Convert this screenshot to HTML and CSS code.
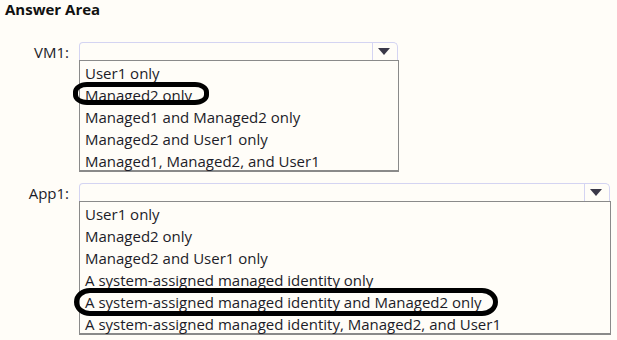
FILE: index.html
```html
<!DOCTYPE html>
<html>
<head>
<meta charset="utf-8">
<link rel="stylesheet" href="styles.css">
</head>
<body>
<div class="page">
  <h1 class="title">Answer Area</h1>
  <div class="row vm">
    <div class="label">VM1:</div>
    <div class="control">
      <div class="select"><span class="arrow"></span></div>
      <ul class="list">
        <li>User1 only</li>
        <li class="marked">Managed2 only</li>
        <li>Managed1 and Managed2 only</li>
        <li>Managed2 and User1 only</li>
        <li>Managed1, Managed2, and User1</li>
      </ul>
    </div>
  </div>
  <div class="row app">
    <div class="label">App1:</div>
    <div class="control">
      <div class="select"><span class="arrow"></span></div>
      <ul class="list">
        <li>User1 only</li>
        <li>Managed2 only</li>
        <li>Managed2 and User1 only</li>
        <li>A system-assigned managed identity only</li>
        <li class="marked">A system-assigned managed identity and Managed2 only</li>
        <li>A system-assigned managed identity, Managed2, and User1</li>
      </ul>
    </div>
  </div>
</div>
</body>
</html>
```
FILE: styles.css
```css
html, body {
  margin: 0;
  padding: 0;
  background: #fffdf8;
}
body {
  font-family: "Open Sans", "Noto Sans", sans-serif;
  color: #1c1c28;
  width: 617px;
  height: 340px;
  overflow: hidden;
}
.page {
  padding: 0 0 0 5px;
}
.title {
  margin: 0;
  font-size: 15px;
  font-weight: 700;
  line-height: 19px;
  color: #111;
}
.row {
  display: flex;
  align-items: flex-start;
}
.vm { margin-top: 23px; }
.app { margin-top: 11px; }
.label {
  width: 64px;
  text-align: right;
  font-size: 15px;
  line-height: 18px;
  padding-top: 1px;
  padding-right: 10px;
}
.vm .control { width: 320px; }
.app .control { width: 532px; }
.select {
  height: 17px;
  border: 1px solid #d4d4f2;
  border-bottom: none;
  border-radius: 4px 5px 0 0;
  display: flex;
  justify-content: flex-end;
  margin-right: 1px;
}
.arrow {
  width: 24px;
  border-left: 1px solid #d4d4f2;
  position: relative;
}
.arrow::after {
  content: "";
  position: absolute;
  left: 5px;
  top: 5px;
  border-left: 6px solid transparent;
  border-right: 6px solid transparent;
  border-top: 7px solid #3a3848;
}
.list {
  list-style: none;
  margin: 0;
  padding: 0 0 0 5px;
  border: 1px solid #8a8a8a;
  border-bottom-width: 2px;
  font-size: 15px;
  line-height: 22px;
}
.vm .list { height: 109px; }
.app .list { height: 131px; }
.list li {
  position: relative;
  white-space: nowrap;
  height: 22px;
}
.list li:first-child { margin-top: 1px; }
.marked::after {
  content: "";
  position: absolute;
  border: 5px solid #000;
}
.vm .marked::after {
  left: -12px;
  top: -2px;
  bottom: 1px;
  width: 126px;
  border-radius: 14px / 10px;
}
.app .marked::after {
  left: -11px;
  top: -3px;
  bottom: -3px;
  width: 414px;
  border-radius: 16px / 14px;
}
```
